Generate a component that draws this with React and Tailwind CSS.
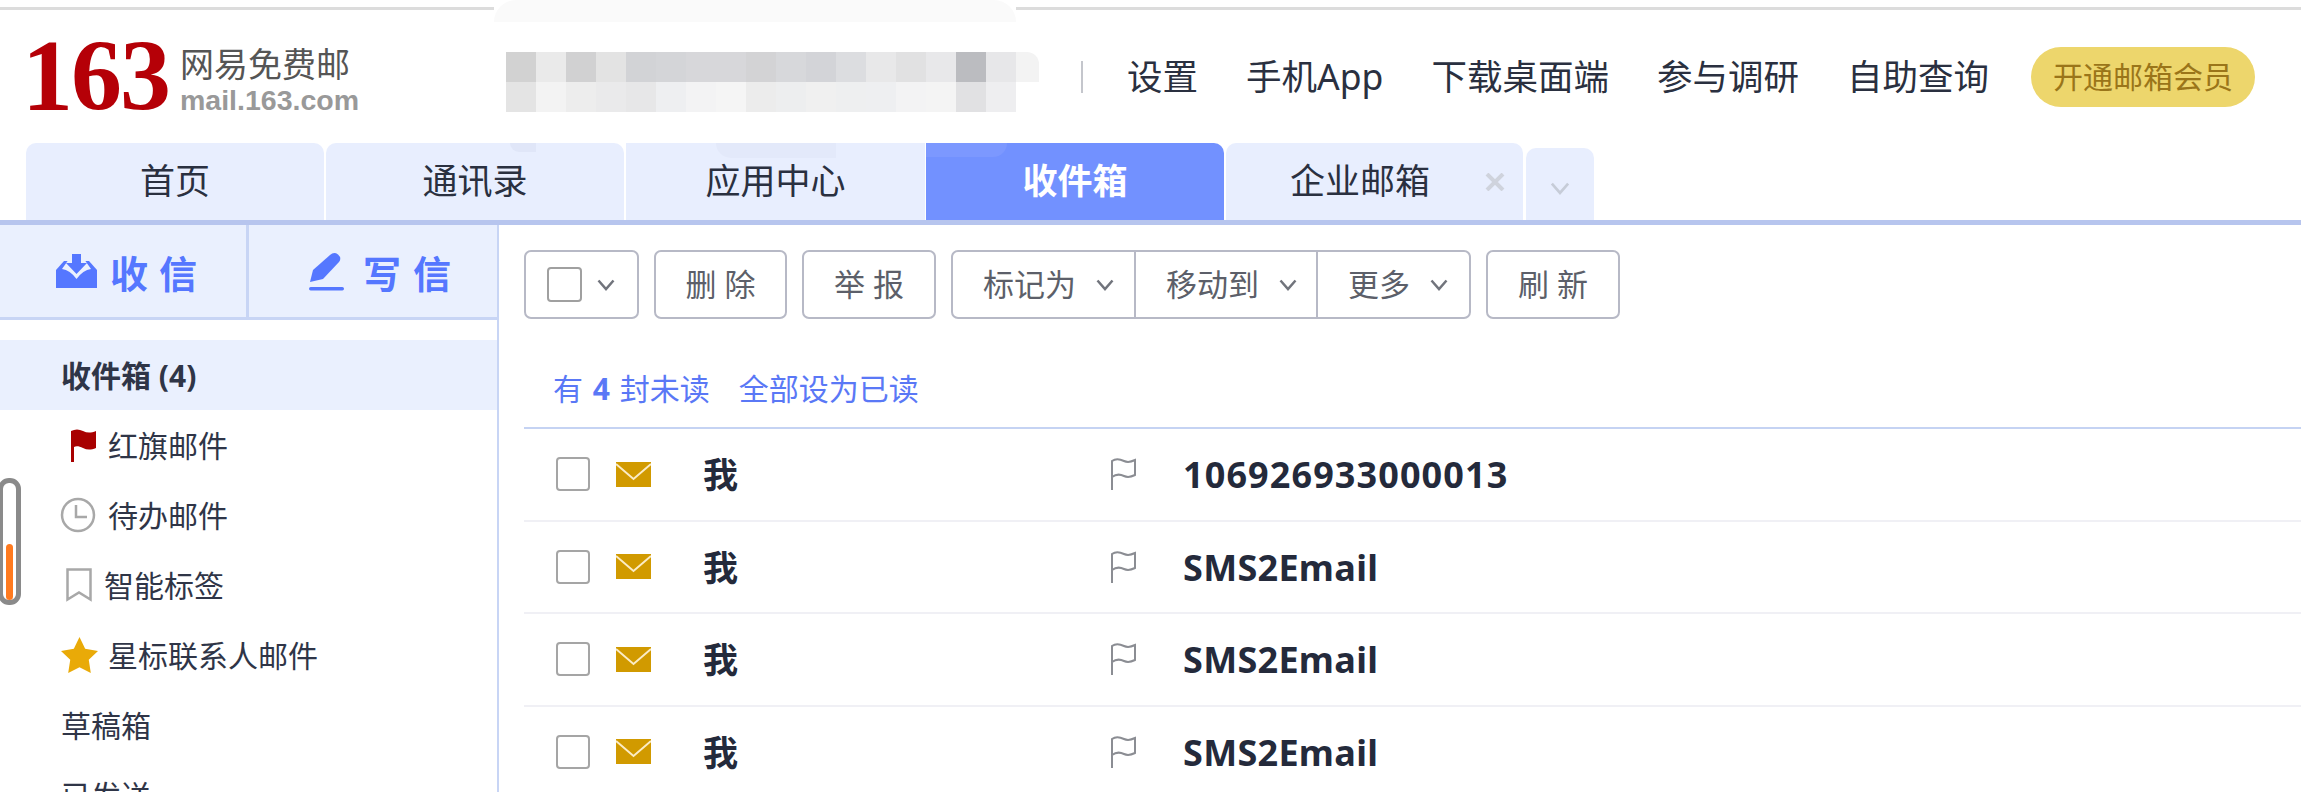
import React from 'react';

const mosaicTop = [
  'w-[30px] bg-[#d2d2d2]', 'w-[30px] bg-[#eaeaea]', 'w-[30px] bg-[#d1d1d2]', 'w-[30px] bg-[#e3e3e3]', 'w-[30px] bg-[#d2d3d6]', 'w-[30px] bg-[#d4d5d8]',
  'w-[30px] bg-[#d7d7da]', 'w-[30px] bg-[#d7d7da]', 'w-[30px] bg-[#d3d3d5]', 'w-[30px] bg-[#d7d8db]', 'w-[30px] bg-[#d3d4d8]', 'w-[30px] bg-[#dcdde0]',
  'w-[30px] bg-[#e8e8e9]', 'w-[30px] bg-[#e1e1e2]', 'w-[30px] bg-[#e8e8ea]', 'w-[30px] bg-[#bbbcc0]', 'w-[30px] bg-[#e7e7e9]', 'w-[23px] bg-[#f3f3f3] rounded-tr-[12px]',
];
const mosaicBottom = [
  'bg-[#e4e4e4]', 'bg-[#f3f3f3]', 'bg-[#ededed]', 'bg-[#eaeaeb]', 'bg-[#e7e7e8]', 'bg-[#eeeff1]',
  'bg-[#f3f3f4]', 'bg-[#f5f5f5]', 'bg-[#ececec]', 'bg-[#edeeef]', 'bg-[#f0f0f0]', 'bg-[#eeeff0]',
  'bg-[#eeeff1]', 'bg-[#f3f3f4]', 'bg-[#f4f4f4]', 'bg-[#e1e1e3]', 'bg-[#eeeef0]',
];

const navLinks = ['设置', '手机App', '下载桌面端', '参与调研', '自助查询'];
const rows = [
  { subject: '106926933000013', spacing: 'tracking-[1.1px]' },
  { subject: 'SMS2Email', spacing: 'tracking-[0.3px]' },
  { subject: 'SMS2Email', spacing: 'tracking-[0.3px]' },
  { subject: 'SMS2Email', spacing: 'tracking-[0.3px]' },
];

const Chevron = ({ className }) => (
  <svg viewBox="0 0 18 12" fill="none" stroke="currentColor" strokeWidth="2.500" className={className}>
    <path d="M1.500 1.500 9 10l7.500-8.500" />
  </svg>
);

const Tab = ({ label, active, className = '' }) => (
  <div
    className={`flex items-center justify-center h-[77px] text-[35px] ${
      active ? 'bg-[#7291ff] text-white font-bold rounded-tr-[10px]' : 'bg-[#e8eefe] text-[#2a3040]'
    } ${className}`}
  >
    {label}
  </div>
);

const InboxIcon = () => (
  <svg viewBox="0 0 41 34" className="w-[41px] h-[34px]">
    <path d="M8 7h25l8 9v18H0V16z" fill="#5577ff" />
    <path d="M13 5h15l7 10q-8 1-14.500 10Q14 16 6 15z" fill="#eaf0fe" />
    <path d="M16 0h9v9h6L20.500 20 10 9h6z" fill="#5577ff" />
  </svg>
);

const PenIcon = () => (
  <svg viewBox="0 0 36 39" className="w-[36px] h-[39px]" fill="#5577ff">
    <path d="M1 30 4 18 21 3q4-3.500 8-.500 4 3.500 1 7.500L14 27z" />
    <rect x="0" y="35" width="35" height="3.500" rx="1.700" />
  </svg>
);

const SideItem = ({ icon, children, active, textClass = 'ml-[61px]' }) => (
  <div className={`flex items-center h-[70px] text-[30px] text-[#2f3547] ${active ? 'bg-[#eaf0fe] font-bold' : ''}`}>
    {icon}
    <span className={textClass}>{children}</span>
  </div>
);

const Button = ({ children, className = '' }) => (
  <div
    className={`flex items-center justify-center h-[69px] border-2 border-[#b7b9c6] rounded-[7px] text-[31px] text-[#5c5f69] ${className}`}
  >
    {children}
  </div>
);

const FlagOutline = () => (
  <svg viewBox="0 0 27 32" className="w-[27px] h-[32px]" fill="none" stroke="#8b8d93" strokeWidth="2">
    <path d="M2 32V3c4-3 8-2 12 0s7 1 11-1v15c-4 2-7 3-11 1s-8-2-12 1" />
  </svg>
);

const MailRow = ({ subject, spacing }) => (
  <div className="flex items-center h-[92.500px] border-b-2 border-[#f0f0f5] pl-[32px]">
    <div className="w-[34px] h-[34px] border-2 border-[#a5a5a5] rounded-[4px]" />
    <svg viewBox="0 0 35 25" className="w-[35px] h-[25px] ml-[26px]">
      <rect width="35" height="25" fill="#d19a00" />
      <path d="M0 2l17.500 15L35 2" fill="none" stroke="#fbecc6" strokeWidth="2" />
    </svg>
    <span className="w-[407px] ml-[52px] pt-[2px] text-[35px] font-bold text-[#242a3b]">我</span>
    <FlagOutline />
    <span className={`ml-[46px] pt-[2px] text-[36px] font-bold text-[#242a3b] ${spacing}`}>{subject}</span>
  </div>
);

export default function App() {
  return (
    <div className="relative w-[2301px] h-[792px] overflow-hidden bg-white font-['Noto_Sans','Noto_Sans_CJK_SC',sans-serif]">
      <div className="h-[10px] border-b-[3px] border-[#dcdcdc]" />

      <header className="flex items-center h-[133px] relative">
        <div className="flex items-center ml-[22px] w-[458px]">
          <span className="font-['Liberation_Serif',serif] font-bold text-[102px] leading-none tracking-[-2px] text-[#b50007] h-[78px] -mt-[26px]">
            163
          </span>
          <div className="ml-[11px] flex flex-col mt-[6px]">
            <span className="text-[34px] leading-[40px] text-[#555555]">网易免费邮</span>
            <span className="text-[28.500px] leading-[32px] font-bold text-[#999999] font-['Liberation_Sans',sans-serif]">mail.163.com</span>
          </div>
        </div>
        <div className="ml-auto flex items-center text-[35.500px] text-[#2a3040]">
          <div className="w-[2px] h-[32px] bg-[#c4c6cc] mr-[44px]" />
          {navLinks.map((link) => (
            <span key={link} className="mr-[48px]">{link}</span>
          ))}
          <span className="-ml-[6px] mr-[46px] flex items-center justify-center w-[224px] h-[60px] rounded-[30px] bg-[#edd66c] text-[30px] text-[#9a7519]">
            开通邮箱会员
          </span>
        </div>
      </header>

      <nav className="flex items-end pl-[26px] h-[77px] gap-[2px]">
        <Tab label="首页" className="w-[298px] rounded-t-[10px]" />
        <Tab label="通讯录" className="w-[298px] rounded-t-[10px]" />
        <Tab label="应用中心" className="w-[299px]" />
        <Tab label="收件箱" active className="w-[298px] -ml-[1px]" />
        <div className="relative flex items-center justify-center w-[297px] h-[77px] rounded-t-[10px] bg-[#e8eefe] text-[35px] text-[#2a3040] pr-[29px]">
          企业邮箱
          <svg viewBox="0 0 20 18" className="absolute left-[259px] top-[30px] w-[20px] h-[18px]" fill="none" stroke="#cfd3dd" strokeWidth="4">
            <path d="M2 1l16 16M18 1 2 17" />
          </svg>
        </div>
        <div className="flex items-center justify-center ml-[1px] w-[68px] h-[72px] rounded-t-[10px] bg-[#e8eefe] text-[#c6ccd8] pt-[8px]">
          <Chevron className="w-[20px] h-[13px]" />
        </div>
      </nav>
      <div className="h-[5px] bg-[#b7c5ee]" />

      <div className="flex h-[567px]">
        <aside className="w-[499px] shrink-0 border-r-2 border-[#c8d5f5]">
          <div className="flex h-[95px] bg-[#eaf0fe] border-b-[3px] border-[#c8d5f5] text-[38px] font-bold text-[#5577ff]">
            <div className="flex items-center w-[249px] pl-[56px] border-r-[3px] border-[#c8d5f5]">
              <InboxIcon />
              <span className="ml-[13px] tracking-[11px] pt-[5px]">收信</span>
            </div>
            <div className="flex items-center pl-[60px]">
              <PenIcon />
              <span className="ml-[18px] tracking-[12px] pt-[5px]">写信</span>
            </div>
          </div>

          <div className="mt-[20px]">
            <SideItem active>收件箱 (4)</SideItem>
            <SideItem
              icon={
                <svg viewBox="0 0 26 33" className="w-[26px] h-[33px] ml-[71px]" fill="#a80000">
                  <path d="M0 2c4-2 8-2 12 0s8 2 13 0v17c-5 2-9 2-13 0s-7-2-9-1v15H0z" />
                </svg>
              }
              textClass="ml-[11px]"
            >
              红旗邮件
            </SideItem>
            <SideItem
              icon={
                <svg viewBox="0 0 36 36" className="w-[36px] h-[36px] ml-[60px]" fill="none" stroke="#a8a8a8" strokeWidth="2.500">
                  <circle cx="18" cy="18" r="16" />
                  <path d="M16 8v12h11" />
                </svg>
              }
              textClass="ml-[12px]"
            >
              待办邮件
            </SideItem>
            <SideItem
              icon={
                <svg viewBox="0 0 26 34" className="w-[26px] h-[34px] ml-[66px]" fill="none" stroke="#a8a8a8" strokeWidth="2.500">
                  <path d="M1.500 1.500h23v30l-11.500-7-11.500 7z" />
                </svg>
              }
              textClass="ml-[12px]"
            >
              智能标签
            </SideItem>
            <SideItem
              icon={
                <svg viewBox="0 0 36 35" className="w-[37px] h-[36px] ml-[61px]" fill="#e9aa08">
                  <path d="M18 0l5.500 11.500L36 13.500l-9 8.500 2 13-11-5.500L7 35l2-13-9-8.500 12.500-2z" />
                </svg>
              }
              textClass="ml-[10px]"
            >
              星标联系人邮件
            </SideItem>
            <SideItem>草稿箱</SideItem>
            <SideItem>已发送</SideItem>
          </div>
        </aside>

        <main className="flex-1 pl-[25px]">
          <div className="flex items-center pt-[25px] gap-[15px]">
            <Button className="w-[115px] gap-[15px]">
              <div className="w-[35px] h-[35px] border-2 border-[#a0a0a0] rounded-[4px] -ml-[2px]" />
              <Chevron className="w-[18px] h-[12px] text-[#71747c]" />
            </Button>
            <Button className="w-[133px]">删 除</Button>
            <Button className="w-[134px]">举 报</Button>
            <div className="flex h-[69px] w-[520px] border-2 border-[#b7b9c6] rounded-[7px] text-[31px] text-[#5c5f69]">
              <div className="flex items-center gap-[20px] w-[183px] pl-[30px] border-r-2 border-[#b7b9c6]">
                标记为<Chevron className="w-[18px] h-[12px] text-[#71747c]" />
              </div>
              <div className="flex items-center gap-[20px] w-[182px] pl-[30px] border-r-2 border-[#b7b9c6]">
                移动到<Chevron className="w-[18px] h-[12px] text-[#71747c]" />
              </div>
              <div className="flex items-center gap-[20px] flex-1 pl-[30px]">
                更多<Chevron className="w-[18px] h-[12px] text-[#71747c]" />
              </div>
            </div>
            <Button className="w-[134px]">刷 新</Button>
          </div>

          <div className="flex items-center h-[110px] pt-[30px] pl-[29px] border-b-2 border-[#c5d3f3] text-[30px] text-[#5a78f6]">
            <span>有 <b className="mx-[2px]">4</b> 封未读</span>
            <span className="ml-[29px]">全部设为已读</span>
          </div>

          {rows.map((row, i) => (
            <MailRow key={i} subject={row.subject} spacing={row.spacing} />
          ))}
        </main>
      </div>

      {/* blurred account name patch lying over the header */}
      <div className="absolute left-[494px] top-0 w-[522px] h-[143px] bg-white">
        <div className="h-[22px] bg-[#fafafa] rounded-t-[30px]" />
        <div className="mt-[30px] ml-[12px] flex h-[30px]">
          {mosaicTop.map((c, i) => (
            <div key={i} className={`shrink-0 ${c}`} />
          ))}
        </div>
        <div className="ml-[12px] flex h-[30px]">
          {mosaicBottom.map((c, i) => (
            <div key={i} className={`shrink-0 w-[30px] ${c}`} />
          ))}
        </div>
      </div>
      <div className="absolute left-[510px] top-[143px] w-[26px] h-[9px] bg-[#e0e6f8] rounded-bl-[26px]" />
      <div className="absolute left-[716px] top-[143px] w-[120px] h-[15px] bg-[#e3e9fa] rounded-bl-[100px]" />
      <div className="absolute left-[926px] top-[143px] w-[81px] h-[14px] bg-[#7c98ff] rounded-br-[60px]" />

      {/* floating widget at the left edge */}
      <div className="absolute -left-[2px] top-[478px] w-[23px] h-[127px] border-[5px] border-[#8a8a8a] rounded-[11px]">
        <div className="absolute left-[3px] top-[61px] w-[7px] h-[56px] rounded-[4px] bg-[#ff7a1f]" />
      </div>
    </div>
  );
}
